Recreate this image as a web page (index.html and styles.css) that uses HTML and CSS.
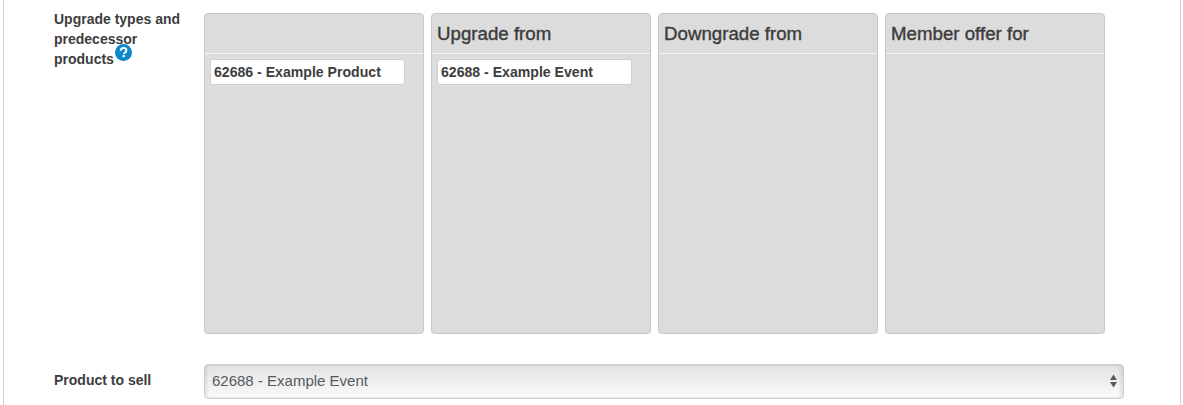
FILE: index.html
```html
<!DOCTYPE html>
<html lang="en">
<head>
<meta charset="utf-8">
<title>Upgrade types</title>
<link rel="stylesheet" href="styles.css">
</head>
<body>
<main class="page">
  <section class="row row-upgrades">
    <div class="label label-multi">Upgrade types and predecessor products<svg class="help" width="17" height="17" viewBox="0 0 17 17" aria-hidden="true"><circle cx="8.5" cy="8.5" r="8.5" fill="#0a8acb"/><path d="M5.7 6.8c0-1.7 1.200-2.800 2.900-2.800 1.600 0 2.800 1 2.800 2.400 0 1-.5 1.600-1.400 2.200-.7.500-.9.800-.9 1.500" fill="none" stroke="#fff" stroke-width="2"/><rect x="7.600" y="11" width="2.200" height="2.200" fill="#fff"/></svg></div>
    <div class="columns">
      <div class="col">
        <div class="col-head"></div>
        <div class="col-body"><div class="chip">62686 - Example Product</div></div>
      </div>
      <div class="col">
        <div class="col-head">Upgrade from</div>
        <div class="col-body"><div class="chip">62688 - Example Event</div></div>
      </div>
      <div class="col">
        <div class="col-head">Downgrade from</div>
        <div class="col-body"></div>
      </div>
      <div class="col">
        <div class="col-head">Member offer for</div>
        <div class="col-body"></div>
      </div>
    </div>
  </section>
  <section class="row row-select">
    <div class="label">Product to sell</div>
    <div class="select">
      <span>62688 - Example Event</span>
      <svg class="arrows" width="7" height="14" viewBox="0 0 7 14" aria-hidden="true"><path d="M3.500 0.500 7 6H0z M0 8h7L3.500 13.500z" fill="#555a60"/></svg>
    </div>
  </section>
</main>
</body>
</html>
```
FILE: styles.css
```css
html, body {
  margin: 0;
  padding: 0;
  background: #fff;
  height: 405px;
  overflow: hidden;
}
body {
  font-family: "Liberation Sans", Arial, sans-serif;
  color: #3d3d3d;
}
.page {
  box-sizing: border-box;
  width: 1178px;
  height: 405px;
  margin-left: 3px;
  border-left: 1px solid #cfcfcf;
  border-right: 1px solid #cfcfcf;
  padding: 13px 0 0 50px;
}
.row {
  display: flex;
}
.label {
  width: 150px;
  flex: none;
  font-size: 14px;
  font-weight: 700;
  line-height: 20px;
  color: #3d3d3d;
}
.label-multi {
  box-sizing: border-box;
  padding-right: 20px;
  margin-top: -4px;
}
.help {
  vertical-align: 3px;
  margin: -8px 0 0 1px;
}
.columns {
  display: flex;
  gap: 7px;
}
.col {
  box-sizing: border-box;
  width: 220px;
  height: 321px;
  background: #dcdcdc;
  border: 1px solid #c8c8c8;
  border-radius: 4px;
}
.col-head {
  box-sizing: border-box;
  height: 40px;
  padding: 0 5px;
  border-bottom: 1px solid #f6f6f6;
  font-size: 18.7px;
  line-height: 40px;
  color: #3d3d3d;
  -webkit-text-stroke: 0.4px #3d3d3d;
}
.col-body {
  padding: 5px 18px 0 5px;
}
.chip {
  box-sizing: border-box;
  height: 26px;
  padding: 0 3px;
  background: #fff;
  border: 1px solid #d0d0d0;
  border-radius: 3px;
  font-size: 14.1px;
  font-weight: 700;
  line-height: 24px;
  color: #3d3d3d;
}
.row-select {
  margin-top: 30px;
}
.row-select .label {
  line-height: 33px;
}
.select {
  box-sizing: border-box;
  width: 920px;
  height: 35px;
  display: flex;
  align-items: center;
  justify-content: space-between;
  padding: 0 6px 2px 7px;
  border: 1px solid #cdcdcd;
  border-radius: 4px;
  background: linear-gradient(#e2e2e2, #fbfbfb);
  box-shadow: inset 2px 0 3px rgba(0,0,0,.08), inset -3px 0 3px rgba(0,0,0,.08);
  font-size: 15px;
  color: #555a60;
}
```
